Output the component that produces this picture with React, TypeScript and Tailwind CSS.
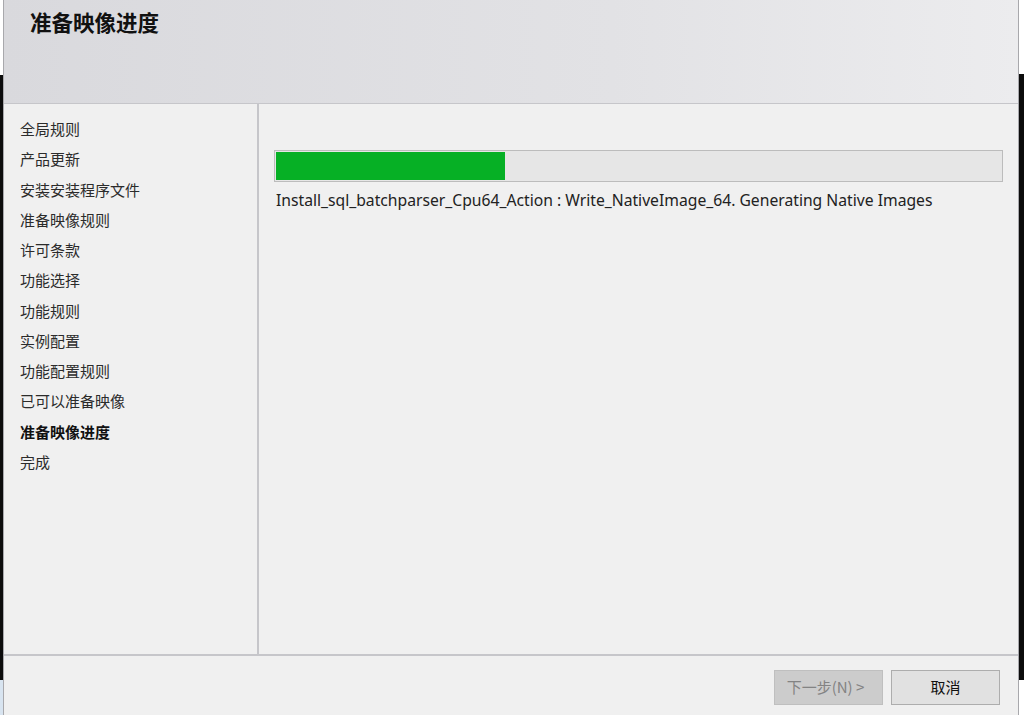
const cjk = "font-['Noto_Sans_CJK_SC','Microsoft_YaHei',sans-serif]"

const steps = [
  '全局规则',
  '产品更新',
  '安装安装程序文件',
  '准备映像规则',
  '许可条款',
  '功能选择',
  '功能规则',
  '实例配置',
  '功能配置规则',
  '已可以准备映像',
  '准备映像进度',
  '完成',
]

const active = '准备映像进度'

export default function App() {
  return (
    <div className={`flex h-[715px] w-[1024px] overflow-hidden bg-white ${cjk}`}>
      {/* desktop behind the window, left */}
      <div className="flex w-[3px] shrink-0 flex-col">
        <div className="h-[75px] bg-white" />
        <div className="flex-1 bg-[#0c0c0c]" />
        <div className="h-[35px] bg-[#d8e4f0]" />
      </div>

      <div className="flex min-w-0 flex-1 flex-col border-x border-[#a8a8ac] bg-[#f0f0f0]">
        <div className="h-[104px] shrink-0 border-b border-[#c6c6ca] bg-[linear-gradient(to_right,#d9d9dd,#e2e2e5_60%,#ececee)] pl-[26px] pt-[7px]">
          <h1 className="text-[21.5px] font-bold leading-[30px] text-[#111]">准备映像进度</h1>
        </div>

        <div className="flex flex-1">
          <div className="w-[255px] shrink-0 border-r-2 border-[#c6c6ca] pl-[16px] pt-[10px]">
            {steps.map((s) => (
              <div
                key={s}
                className={`h-[30.25px] text-[15px] leading-[30px] ${
                  s === active ? 'font-bold text-[#111]' : 'text-[#2b2b2b]'
                }`}
              >
                {s}
              </div>
            ))}
          </div>

          <div className="flex-1 pl-[15px] pr-[15px] pt-[46px]">
            <div className="h-[32px] border border-[#bcbcbc] bg-[#e6e6e6] p-px">
              <div className="h-full w-[229px] bg-[#06b025]" />
            </div>
            <div className="mt-[7px] pl-[2px] font-['Noto_Sans','Segoe_UI',sans-serif] text-[15.7px] leading-[22px] text-[#222]">
              Install_sql_batchparser_Cpu64_Action : Write_NativeImage_64. Generating Native Images
            </div>
          </div>
        </div>

        <div className="flex h-[61px] shrink-0 items-start justify-end gap-[8px] border-t-2 border-[#c6c6ca] pr-[18px] pt-[14px]">
          <button className="h-[35px] w-[109px] border border-[#bfbfbf] bg-[#cccccc] pr-[6px] text-[15px] text-[#838383]">
            下一步(N) &gt;
          </button>
          <button className="h-[35px] w-[109px] border border-[#adadad] bg-[#e1e1e1] text-[15px] text-[#111]">
            取消
          </button>
        </div>
      </div>

      {/* desktop behind the window, right */}
      <div className="flex w-[5px] shrink-0 flex-col">
        <div className="h-[74px] bg-white" />
        <div className="h-[606px] bg-[#0c0c0c]" />
        <div className="flex-1 bg-white" />
      </div>
    </div>
  )
}
